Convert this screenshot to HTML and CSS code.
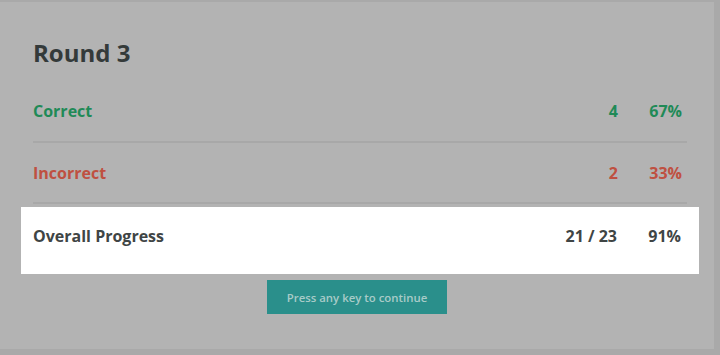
FILE: index.html
```html
<!DOCTYPE html>
<html>
<head>
<meta charset="utf-8">
<link rel="stylesheet" href="styles.css">
</head>
<body>
<div class="card">
  <h1 class="title">Round 3</h1>
  <div class="row correct">
    <span class="label">Correct</span>
    <span class="count">4</span>
    <span class="pct">67%</span>
  </div>
  <div class="row incorrect">
    <span class="label">Incorrect</span>
    <span class="count">2</span>
    <span class="pct">33%</span>
  </div>
  <div class="row overall">
    <span class="label">Overall Progress</span>
    <span class="count">21 / 23</span>
    <span class="pct">91%</span>
  </div>
  <div class="actions">
    <button class="continue">Press any key to continue</button>
  </div>
</div>
</body>
</html>
```
FILE: styles.css
```css
html, body {
  margin: 0;
  padding: 0;
}
body {
  background: #a9a9a9;
  width: 720px;
  height: 355px;
  overflow: hidden;
  font-family: "Open Sans", Lato, sans-serif;
  padding-top: 2px;
  box-sizing: border-box;
}
.card {
  width: 714px;
  height: 347px;
  background: #b3b3b3;
  box-sizing: border-box;
  padding: 0 15px 0 21px;
}
.title {
  margin: 0;
  padding: 37px 0 0 12px;
  height: 79px;
  box-sizing: border-box;
  font-size: 24px;
  line-height: 28px;
  font-weight: 700;
  color: #343a3a;
}
.row {
  display: flex;
  align-items: center;
  font-size: 16px;
  line-height: 18px;
  font-weight: 700;
  margin: 0 12px;
  padding: 21px 5px 21px 0;
  border-bottom: 2px solid #a8a8a8;
}
.row .label {
  flex: 1;
}
.row .count {
  text-align: right;
}
.row .pct {
  width: 64px;
  text-align: right;
}
.correct { color: #1f8a57; }
.incorrect { color: #bf5041; padding-bottom: 20px; }
.overall {
  margin: 3px 0 0 0;
  background: #ffffff;
  color: #3f4545;
  padding: 20px 18px 29px 12px;
  border-bottom: none;
}
.actions {
  display: flex;
  justify-content: center;
  padding-top: 6px;
}
.continue {
  width: 180px;
  height: 34px;
  border: none;
  background: #2a8f8b;
  color: #a8cbc8;
  font-family: "Open Sans", Lato, sans-serif;
  font-size: 11.4px;
  font-weight: 600;
  margin-left: -6px;
}
```
